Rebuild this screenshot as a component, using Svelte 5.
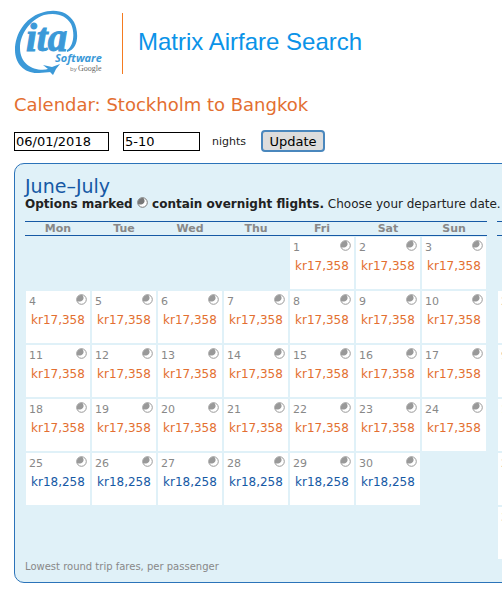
<script>
	const days = ['Mon', 'Tue', 'Wed', 'Thu', 'Fri', 'Sat', 'Sun'];

	function buildWeeks(offset, length, fareFor) {
		const weeks = [];
		for (let row = 0; row < 6; row++) {
			weeks.push(
				days.map((_, col) => {
					const day = row * 7 + col - offset + 1;
					return day > 0 && day <= length ? { day, ...fareFor(day) } : null;
				})
			);
		}
		return weeks;
	}

	const months = [
		{
			name: 'June',
			weeks: buildWeeks(4, 30, (day) =>
				day < 25 ? { fare: 'kr17,358', low: true } : { fare: 'kr18,258', low: false }
			)
		},
		{
			name: 'July',
			weeks: buildWeeks(6, 31, () => ({ fare: 'kr18,258', low: false }))
		}
	];

	let departure = $state('06/01/2018');
	let nights = $state('5-10');
</script>

{#snippet moon()}
	<svg class="moon" viewBox="0 0 11 11" aria-label="overnight">
		<circle cx="5.5" cy="5.5" r="4.8" fill="#fff" stroke="currentColor" stroke-width="1" />
		<path
			d="M6.4 0.9C7.8 2.6 8 4.6 6.8 6C5.4 7.6 3 8 1.1 7.2A4.8 4.8 0 0 1 6.4 0.9Z"
			fill="currentColor"
		/>
	</svg>
{/snippet}

<div class="page">
	<header>
		<svg class="logo" viewBox="0 0 90 66" role="img" aria-label="ITA Software by Google">
			<path
				d="M53 42C65 39 65 22 60 12C54 1 40 -2 27 3C11 8 1 24 1 40C1 54 11 64 25 63L37 62L35 59C22 62 6 56 6 38C6 24 16 10 30 5C42 2 52 5 57 14C61 22 60 36 53 40Z"
				fill="#3b99d8"
			/>
			<path d="M29 55L38 57L46 54L42 59L39 65L36 62L28 62L34 59Z" fill="#3b99d8" />
			<text class="ita" x="12" y="41">ita</text>
			<text class="software" x="41" y="52">Software</text>
			<text class="by" x="56" y="61">by</text>
			<text class="google" x="64" y="61">Google</text>
		</svg>
		<div class="title">Matrix Airfare Search</div>
	</header>

	<h1>Calendar: Stockholm to Bangkok</h1>

	<form onsubmit={(e) => e.preventDefault()}>
		<input class="date" aria-label="Departure date" bind:value={departure} />
		<input class="nights" id="nights" bind:value={nights} />
		<label for="nights">nights</label>
		<button>Update</button>
	</form>

	<section class="panel">
		<h2>June–July</h2>
		<p class="hint">
			<b>Options marked <span class="dark">{@render moon()}</span> contain overnight flights.</b> Choose your departure date.
		</p>
		<div class="months">
			{#each months as month}
				<table aria-label={month.name}>
					<thead>
						<tr>
							{#each days as day}
								<th>{day}</th>
							{/each}
						</tr>
					</thead>
					<tbody>
						{#each month.weeks as week}
							<tr>
								{#each week as cell}
									<td class:filled={cell}>
										{#if cell}
											<div class="top"><span>{cell.day}</span>{@render moon()}</div>
											<a href="#fare" class:low={cell.low}>{cell.fare}</a>
										{/if}
									</td>
								{/each}
							</tr>
						{/each}
					</tbody>
				</table>
			{/each}
		</div>
		<p class="note">Lowest round trip fares, per passenger</p>
	</section>
</div>

<style>
	:global(body) {
		background: #fff;
	}
	.page {
		overflow-x: hidden;
		padding: 10px 0 13px 14px;
		font-family: Verdana, 'DejaVu Sans', sans-serif;
		font-size: 12px;
		color: #222;
	}
	header {
		display: flex;
		align-items: flex-end;
	}
	.logo {
		width: 90px;
		height: 66px;
		flex: none;
	}
	.ita {
		font: italic bold 39px 'Liberation Serif', serif;
		fill: #3b99d8;
		stroke: #3b99d8;
	}
	.software {
		font: italic bold 11px 'Open Sans', sans-serif;
		fill: #3b99d8;
	}
	.by {
		font: 6px 'Open Sans', sans-serif;
		fill: #777;
	}
	.google {
		font: 8px 'Liberation Serif', serif;
		fill: #666;
	}
	.title {
		margin: 0 0 2px 18px;
		padding: 0 0 3px 15px;
		border-left: 1px solid #f47b20;
		font: 24px/58px 'Liberation Sans', Arial, sans-serif;
		color: #0b93e8;
		white-space: nowrap;
	}
	h1,
	h2 {
		margin: 0;
		font-weight: normal;
	}
	h1 {
		margin-top: 17px;
		font-size: 18px;
		line-height: 24px;
		color: #e36f31;
	}
	form {
		display: flex;
		align-items: center;
		margin-top: 13px;
	}
	input {
		box-sizing: border-box;
		height: 19px;
		margin: 0 14px 0 0;
		padding: 0 1px;
		border: 1px solid #000;
		background: #fff;
		font: 13px 'DejaVu Sans', sans-serif;
		color: #000;
	}
	.date {
		width: 95px;
	}
	.nights {
		width: 77px;
		margin-right: 12px;
	}
	label {
		margin-right: 15px;
		font-size: 11px;
	}
	button {
		box-sizing: border-box;
		width: 64px;
		height: 22px;
		padding: 0;
		border: 2px solid #4a87bd;
		border-radius: 4px;
		background: #ddd;
		font: 13px 'DejaVu Sans', sans-serif;
		color: #000;
	}
	.panel {
		width: max-content;
		margin-top: 11px;
		padding: 12px 10px 8px;
		border: 1px solid #2b73b9;
		border-radius: 10px;
		background: #e0f1f8;
	}
	h2 {
		font-size: 19px;
		line-height: 20px;
		color: #1659a5;
	}
	.hint {
		margin: 0 0 9px;
		line-height: 16px;
	}
	.moon {
		width: 11px;
		height: 11px;
		flex: none;
		color: #999;
	}
	.dark .moon {
		color: #777;
	}
	.months {
		display: flex;
		gap: 10px;
	}
	table {
		width: 462px;
		table-layout: fixed;
		border-spacing: 0;
	}
	th {
		padding: 0;
		border: solid #1659a5;
		border-width: 1px 0;
		font-size: 11px;
		line-height: 13px;
		color: #888;
	}
	td {
		box-sizing: border-box;
		height: 54px;
		padding: 3px 3px 0;
		border: 1px solid #e0f1f8;
		vertical-align: top;
	}
	.filled {
		background: #fff;
	}
	.top {
		display: flex;
		justify-content: space-between;
		font-size: 11px;
		line-height: 16px;
		color: #888;
	}
	td a {
		display: block;
		padding-left: 2px;
		line-height: 20px;
		color: #1659a5;
		text-decoration: none;
	}
	td a.low {
		color: #e36f31;
	}
	.note {
		margin: 0;
		font-size: 10px;
		line-height: 14px;
		color: #888;
	}
</style>
